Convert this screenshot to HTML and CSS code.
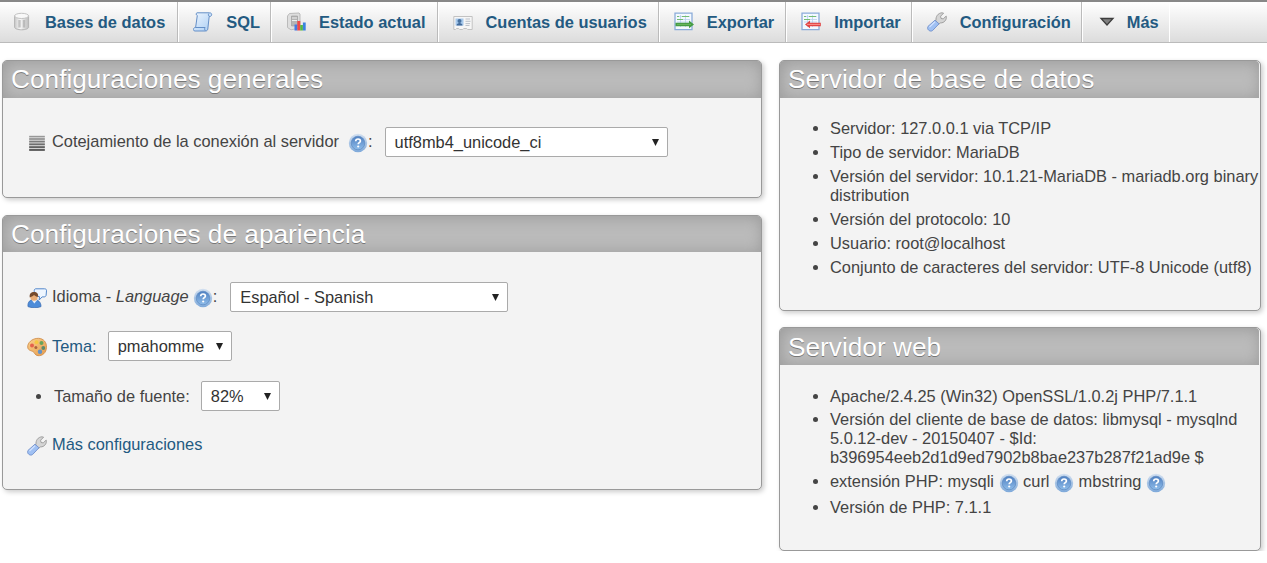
FILE: index.html
```html
<!DOCTYPE html>
<html lang="es">
<head>
<meta charset="utf-8">
<title>phpMyAdmin</title>
<link rel="stylesheet" href="styles.css">
</head>
<body>
<svg class="defs" width="0" height="0">
  <defs>
    <linearGradient id="gGrey" x1="0" x2="1" y1="0" y2="0"><stop offset="0" stop-color="#c9c9c9"/><stop offset=".4" stop-color="#f7f7f7"/><stop offset="1" stop-color="#bdbdbd"/></linearGradient>
    <linearGradient id="gBlue" x1="0" x2="1" y1="0" y2="1"><stop offset="0" stop-color="#eef6ff"/><stop offset="1" stop-color="#a9cdf3"/></linearGradient>
    <linearGradient id="gHelp" x1="0" x2="0" y1="0" y2="1"><stop offset="0" stop-color="#4f7fc0"/><stop offset="1" stop-color="#8fbdea"/></linearGradient>
    <linearGradient id="gRing" x1="0" x2="0" y1="0" y2="1"><stop offset="0" stop-color="#d3e0f0"/><stop offset="1" stop-color="#7ea9da"/></linearGradient>
    <linearGradient id="gPal" x1="0" x2="1" y1="0" y2="1"><stop offset="0" stop-color="#fbd28f"/><stop offset="1" stop-color="#e59a4c"/></linearGradient>
    <symbol id="db" viewBox="0 0 20 20"><path d="M2.6 3.8v11.4c0 1.500 3.200 2.600 7 2.600s7-1.100 7-2.600V3.800z" fill="url(#gGrey)" stroke="#b4b4b4"/><ellipse cx="9.600" cy="3.900" rx="7" ry="2.600" fill="#f8f8f8" stroke="#c3c3c3"/><path d="M7.500 8v7.500M12 8v7.500" stroke="#aaa" stroke-width="2.400" opacity=".65"/></symbol>
    <symbol id="sql" viewBox="0 0 20 20"><path d="M4 .8h12.500c1.800 0 2.500 1.200 2 2.500-.3.900-1 1.200-1.900 1.200h-.4L14.800 17c-.3 1.400-1 2-2.300 2H2C.5 19 0 17.600.6 16.500c.4-.7 1-1 2-1L4.300 3.500C3 3.200 2.700 1.200 4 .8z" fill="url(#gBlue)" stroke="#648fc7"/><path d="M15.900 1.500c-.9.800-.6 2.800.9 3M2.600 15.500h9.500c-.8 1-.5 2.500.4 3.300" fill="none" stroke="#648fc7"/></symbol>
    <symbol id="stat" viewBox="0 0 20 20"><path d="M3.500 1.500 13 1l1 1v14l-9 1.800-3.500-2.300V4z" fill="#dedede" stroke="#bbb"/><path d="M5.500 4h6v10h-6z" fill="#b5b5b5" stroke="#999" stroke-width=".6"/><path d="M6 6h5M6 8.500h5" stroke="#eee"/><path d="M8.500 12.500h3V18.500h-3z" fill="#4679e0"/><path d="M11.300 9h3v9.500h-3z" fill="#ee4a49"/><path d="M14.200 13h2.700v5.500h-2.700z" fill="#55ba3f"/><path d="M16.900 10.500h2.800v8h-2.800z" fill="#3b82e0"/></symbol>
    <symbol id="users" viewBox="0 0 20 20"><path d="M.8 4.500h18.400v13h-4.500l-1-1h-3l-1 1h-3l-1-1H3.500l-1 1H.8z" fill="#f6f6f6" stroke="#c2c2c2"/><path d="M2.500 6.500h8v7h-8z" fill="#a7c9ec"/><circle cx="6.500" cy="9" r="2" fill="#47719f"/><path d="M3.500 13.500c0-3.500 6-3.500 6 0z" fill="#426b9b"/><path d="M12.500 7h4.500M12.500 9.300h5M12.500 11.600h4.500M12.500 13.500h4" stroke="#bbc0c8"/></symbol>
    <symbol id="sheet" viewBox="0 0 20 20"><path d="M1 1.200h17v16.500H1z" fill="#f4f9ff" stroke="#8bacd9" stroke-width="1.300"/><path d="M3 4.500h13M3 7.500h13M3 10h13M6.500 3v12M11.500 3v12" stroke="#b9d0ed" stroke-width=".8"/><path d="M3 4.500h2M8 4.500h7M3 7.500h6" stroke="#75bd72"/></symbol>
    <symbol id="export" viewBox="0 0 20 20"><use href="#sheet"/><path d="M1.500 10.700h13.500V8.500l5 3.900-5 3.900V14.200H1.500z" fill="#459c43"/><path d="M3 12.400h14" stroke="#7fc36c" stroke-width=".7"/></symbol>
    <symbol id="import" viewBox="0 0 20 20"><use href="#sheet"/><path d="M19.800 10.700H9V8.500l-5 3.900 5 3.900V14.200h10.800z" fill="#e24444"/><path d="M6 12.400h13" stroke="#ffaaa2" stroke-width=".8"/></symbol>
    <symbol id="wrench" viewBox="0 0 20 20"><path d="M9 8.500C8.600 4.500 11 1 15 .8l1.600.4-3 3 .4 2.300 2.200.4 3-2.800c.9 3.500-2 7-5.700 6.800l-2 1.500-4-3.200z" fill="#d5d5d5" stroke="#999" stroke-width=".9"/><path d="M8 8.200 12 11.800 5.600 18.500C3.500 20.400-.8 17.500 1 14.400z" fill="#9fc0f3" stroke="#718fcb" stroke-width=".9"/><path d="M8 9.800 2.500 15" stroke="#d1e2ff" stroke-width="1.200"/></symbol>
    <symbol id="more" viewBox="0 0 20 20"><path d="M4 6.500h12L10 13z" fill="#808080" stroke="#3d3d3d" stroke-width="1.300"/></symbol>
    <symbol id="help" viewBox="0 0 20 20"><circle cx="10" cy="10" r="9.200" fill="url(#gRing)"/><circle cx="10" cy="10" r="6.800" fill="url(#gHelp)" stroke="#5c89c2" stroke-width=".7"/><path d="M7.700 8.200c.1-3 4.700-2.800 4.700-.3 0 1.800-2.200 1.700-2.200 3.400" fill="none" stroke="#fff" stroke-width="1.700"/><circle cx="10.200" cy="13.500" r="1.100" fill="#fff"/></symbol>
    <symbol id="lines" viewBox="0 0 20 20"><path d="M2.200 3.500h15.600" stroke="#999" stroke-width="1.400"/><path d="M2.200 6h15.600" stroke="#858585" stroke-width="1.500"/><path d="M2.200 8.600h15.600" stroke="#6f6f6f" stroke-width="1.600"/><path d="M2.200 11.300h15.600" stroke="#5c5c5c" stroke-width="1.700"/><path d="M2.200 14.100h15.600" stroke="#4a4a4a" stroke-width="1.800"/><path d="M2.200 16.900h15.600" stroke="#444" stroke-width="1.900"/><path d="M2.200 3v14.500h15.600V3z" fill="#999" opacity=".3"/></symbol>
    <symbol id="lang" viewBox="0 0 20 20"><path d="M8.500.8h9c1.500 0 2.200.9 2 2l-.4 4.500c-.2 1-1 1.600-2 1.600h-2L12.200 12l.3-3.300-2.500-.5C7.500 7.700 6 1.200 8.500.8z" fill="#eef6ff" stroke="#5387cb"/><path d="M1 18.600c-.5-4.800 2.200-7.100 6-7.100s7 2.300 7 7.100c-3.500 1.500-9.500 1.500-13 0z" fill="#4d8cd9" stroke="#386cb4" stroke-width=".8"/><path d="m4.700 12 2.600 3.500L10.300 12z" fill="#e7eef8"/><circle cx="7" cy="9" r="3.700" fill="#e9ae78"/><path d="M2.800 9.500C2 6 4.200 3.800 7 4c2.800-.1 4.700 2 4 4.500-1.500.6-3-.4-4-1.400C5.500 8.500 4 9 2.800 9.500z" fill="#754b2e"/></symbol>
    <symbol id="theme" viewBox="0 0 20 20"><path d="M.8 8.500C2 4 6.500 1.300 11.500 1.300c5 .2 8.300 4 8 9.200-.3 5.300-4 8.500-8.500 8.200-3.300-.3-3.200-3.200-5-4.200C4 13.500 0 13.500.8 8.500z" fill="url(#gPal)" stroke="#cc8743" stroke-width=".8"/><circle cx="5" cy="8.500" r="2" fill="#e6604b"/><circle cx="9.500" cy="5.200" r="1.900" fill="#f4c840"/><circle cx="14.500" cy="6" r="2" fill="#67a35b"/><circle cx="16.300" cy="11" r="1.900" fill="#5d8a6c"/><circle cx="13" cy="14.700" r="2.200" fill="#6392c7"/><circle cx="8.900" cy="10.500" r="1.500" fill="#ad633f"/></symbol>
  </defs>
</svg>

<ul class="topmenu">
  <li class="first"><svg class="ic"><use href="#db"/></svg><a>Bases de datos</a></li>
  <li class="sql"><svg class="ic"><use href="#sql"/></svg><a>SQL</a></li>
  <li><svg class="ic"><use href="#stat"/></svg><a>Estado actual</a></li>
  <li><svg class="ic"><use href="#users"/></svg><a>Cuentas de usuarios</a></li>
  <li><svg class="ic"><use href="#export"/></svg><a>Exportar</a></li>
  <li class="tight"><svg class="ic"><use href="#import"/></svg><a>Importar</a></li>
  <li class="tight"><svg class="ic"><use href="#wrench"/></svg><a>Configuración</a></li>
  <li class="last"><svg class="ic"><use href="#more"/></svg><a>Más</a></li>
</ul>

<main class="columns">
  <div class="col main-col">
    <section class="group general">
      <h2>Configuraciones generales</h2>
      <div class="row collation">
        <svg class="ic"><use href="#lines"/></svg><span class="label">Cotejamiento de la conexión al servidor</span>
        <svg class="ic help"><use href="#help"/></svg><span class="colon">:</span>
        <div class="select">utf8mb4_unicode_ci<svg class="arrow" viewBox="0 0 8 8"><path d="M0 0h8L4 8z"/></svg></div>
      </div>
    </section>
    <section class="group appearance">
      <h2>Configuraciones de apariencia</h2>
      <div class="row language">
        <svg class="ic"><use href="#lang"/></svg><span class="label">Idioma - <em>Language</em></span>
        <svg class="ic help"><use href="#help"/></svg><span class="colon">:</span>
        <div class="select">Español - Spanish<svg class="arrow" viewBox="0 0 8 8"><path d="M0 0h8L4 8z"/></svg></div>
      </div>
      <div class="row theme">
        <svg class="ic"><use href="#theme"/></svg><span class="label"><a>Tema:</a></span>
        <div class="select">pmahomme<svg class="arrow" viewBox="0 0 8 8"><path d="M0 0h8L4 8z"/></svg></div>
      </div>
      <div class="row fontsize">
        <i class="dot"></i><span class="label">Tamaño de fuente:</span>
        <div class="select">82%<svg class="arrow" viewBox="0 0 8 8"><path d="M0 0h8L4 8z"/></svg></div>
      </div>
      <div class="row more">
        <svg class="ic"><use href="#wrench"/></svg><span class="label"><a>Más configuraciones</a></span>
      </div>
    </section>
  </div>
  <div class="col side-col">
    <section class="group dbserver">
      <h2>Servidor de base de datos</h2>
      <ul>
        <li>Servidor: 127.0.0.1 via TCP/IP</li>
        <li>Tipo de servidor: MariaDB</li>
        <li>Versión del servidor: 10.1.21-MariaDB - mariadb.org binary<br>distribution</li>
        <li>Versión del protocolo: 10</li>
        <li>Usuario: root@localhost</li>
        <li>Conjunto de caracteres del servidor: UTF-8 Unicode (utf8)</li>
      </ul>
    </section>
    <section class="group webserver">
      <h2>Servidor web</h2>
      <ul>
        <li class="apache">Apache/2.4.25 (Win32) OpenSSL/1.0.2j PHP/7.1.1</li>
        <li>Versión del cliente de base de datos: libmysql - mysqlnd<br>5.0.12-dev - 20150407 - $Id:<br>b396954eeb2d1d9ed7902b8bae237b287f21ad9e $</li>
        <li class="ext">extensión PHP: mysqli <svg class="ic"><use href="#help"/></svg> curl <svg class="ic"><use href="#help"/></svg> mbstring <svg class="ic"><use href="#help"/></svg></li>
        <li>Versión de PHP: 7.1.1</li>
      </ul>
    </section>
  </div>
</main>
</body>
</html>
```
FILE: styles.css
```css
* { box-sizing: border-box; }
body {
  margin: 0;
  background: #fff;
  color: #444;
  font: 16.4px/19px "Liberation Sans", Arial, sans-serif;
}
.defs { display: block; }
ul { margin: 0; padding: 0; }
a { color: #235a81; }
.ic { width: 20px; height: 20px; flex: none; }

.topmenu {
  display: flex;
  height: 43px;
  list-style: none;
  border-top: 2px solid #888;
  border-bottom: 1px solid #bbb;
  background: linear-gradient(#fff, #dcdcdc);
}
.topmenu li {
  display: flex;
  align-items: center;
  padding: 0 11px 0 14px;
  border-right: 1px solid #bbb;
  border-left: 1px solid #fff;
  font-weight: bold;
  white-space: nowrap;
}
.topmenu li.first { padding: 0 12px 0 12px; border-left: 0; }
.topmenu li.sql { padding-right: 10px; }
.topmenu li.tight { padding-right: 10px; }
.topmenu li.last { padding-right: 10px; border-right-color: #fff; }
.topmenu li.last a { margin-left: 10px; }
.topmenu a { margin-left: 13px; }

.columns {
  display: flex;
  gap: 17px;
  padding: 17px 6px 0 2px;
}
.col { display: flex; flex-direction: column; gap: 17px; }
.main-col { width: 760px; }
.side-col { width: 482px; gap: 16px; }

.group {
  border: 1px solid #999;
  border-radius: 5px;
  background: #f3f3f3;
  box-shadow: 2px 2px 5px #ccc;
}
.group h2 {
  margin: 0;
  height: 37px;
  padding-left: 8px;
  border-radius: 4px 4px 0 0;
  background: #bbb;
  box-shadow: inset 1px 1px 15px #999;
  color: #fff;
  font-size: 26.24px;
  font-weight: normal;
  line-height: 36px;
  text-shadow: 0 1px 0 #777;
}
.side-col h2 { margin-right: 1px; }
.general { height: 138px; }
.appearance { height: 275px; }
.appearance h2 { height: 36px; }
.dbserver { height: 251px; }
.webserver { height: 224px; }
.webserver h2 { line-height: 38px; }

.row {
  display: flex;
  align-items: center;
  height: 30px;
  margin-left: 24px;
  white-space: nowrap;
}
.label { margin-left: 5px; }
.collation .label, .language .label, .colon { padding-bottom: 2px; }
.help { margin-left: 5px; }
.row > .ic { margin-top: 2px; }
.collation { margin-top: 29px; }
.collation .help { margin-left: 9px; }
.language { margin-top: 30px; }
.language .help { margin-left: 4px; }
.language .select { margin-left: 13px; }
.theme { margin-top: 19px; }
.fontsize { margin-top: 20px; }
.more { margin-top: 18px; }
.row.more > .ic { margin-top: 4px; }
.dot {
  width: 5px;
  height: 5px;
  margin: 0 8px 0 9px;
  border-radius: 50%;
  background: #444;
}
.select {
  display: flex;
  align-items: center;
  justify-content: space-between;
  height: 30px;
  margin-left: 12px;
  padding: 0 8px 0 9px;
  border: 1px solid #aaa;
  border-radius: 2px;
  background: #fff;
  color: #333;
}
.arrow { width: 7px; height: 7px; fill: #222; }
.collation .select { width: 283px; }
.language .select { width: 278px; }
.theme .select { width: 124px; margin-left: 11px; }
.fontsize .select { width: 79px; margin-left: 11px; }

.group ul { padding: 21px 0 0 50px; white-space: nowrap; }
.webserver ul { padding-top: 22px; }
.group li { margin-bottom: 5px; }
.group li.apache { margin-bottom: 4px; }
.ext .ic { vertical-align: -6px; }
```
